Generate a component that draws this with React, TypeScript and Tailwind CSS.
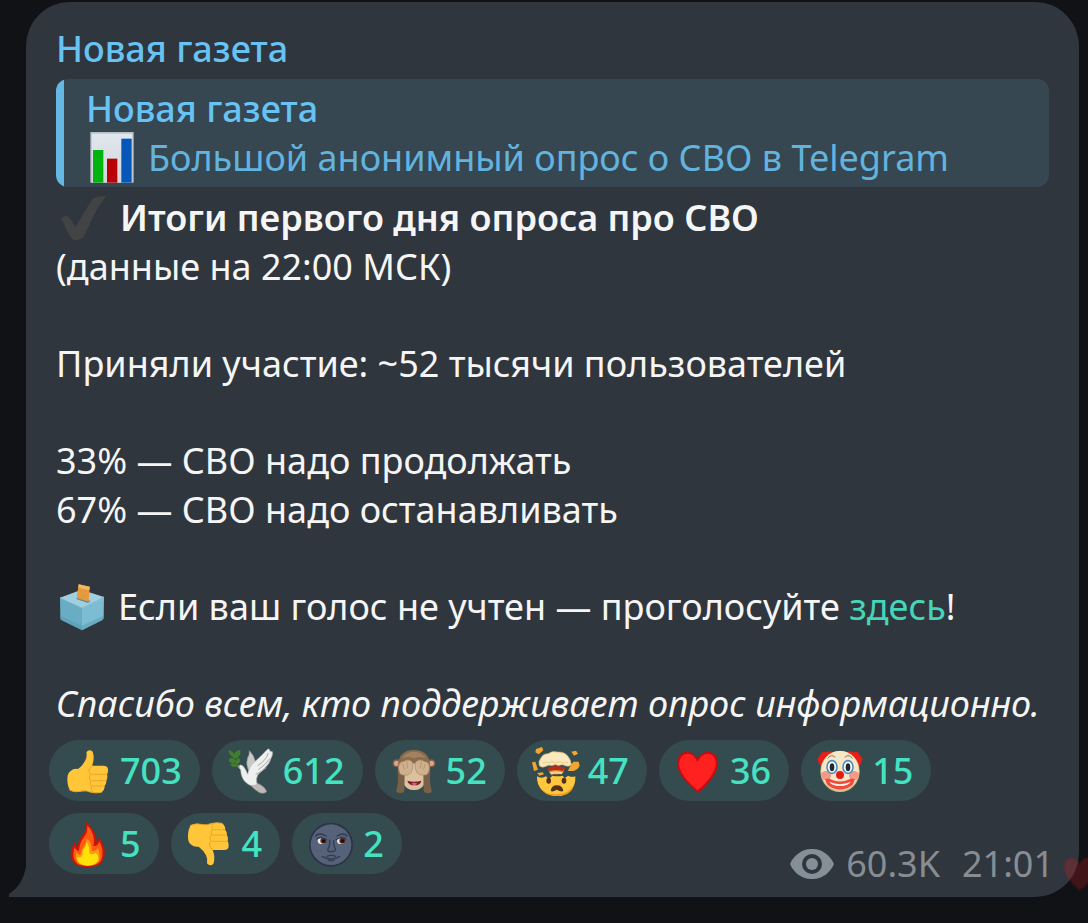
import type { ReactNode } from 'react'

// ============================================
// TYPES
// ============================================

interface EmojiProps {
  label: string
  children: ReactNode
}

interface Reaction {
  id: string
  count: number
  icon: ReactNode
}

// ============================================
// EMOJI
// ============================================

function Emoji({ label, children }: EmojiProps) {
  return (
    <svg viewBox="0 0 132 132" role="img" aria-label={label} className="size-11 flex-none overflow-visible">
      {children}
    </svg>
  )
}

function ThumbShape() {
  return (
    <>
      <path
        fill="#ffc63a"
        d="M61 10Q69 -1 80 8Q87 28 78 50L112 50Q126 50 126 62Q127 70 123 76Q126 86 121 95Q122 104 116 110Q116 124 106 130Q88 134 70 128Q60 124 50 126Q25 132 12 124Q4 112 4 90Q4 72 14 66Q22 58 36 60Q52 48 58 34Q64 22 61 10Z"
      />
      <g fill="none" stroke="#f0a42a" strokeWidth="3" strokeLinecap="round">
        <path d="M78 50Q69 57 68 68Q70 76 78 76L122 76" />
        <path d="M72 78Q66 88 74 95L119 95" />
        <path d="M74 97Q70 106 77 111L114 111" />
        <path d="M76 113Q73 124 80 129" />
        <path d="M12 124Q28 132 50 126Q62 124 72 129Q90 134 106 130" />
      </g>
    </>
  )
}

function ThumbUp() {
  return (
    <Emoji label="Thumb up">
      <ThumbShape />
    </Emoji>
  )
}

function ThumbDown() {
  return (
    <Emoji label="Thumb down">
      <g transform="translate(-4 134) scale(1 -1)">
        <ThumbShape />
      </g>
    </Emoji>
  )
}

function Dove() {
  return (
    <Emoji label="Dove">
      <path fill="#c9c9c7" stroke="#8f9393" strokeWidth="2" d="M57 60Q50 42 56 26Q62 18 61 5Q75 18 79 38L70 78Z" />
      <path fill="#bdbab8" stroke="#8e8b8a" strokeWidth="2" d="M62 98Q80 100 92 106Q108 114 113 128Q104 136 92 131Q78 124 62 106Z" />
      <path
        fill="#efeff0"
        stroke="#b4b5b6"
        strokeWidth="2"
        d="M27 53Q33 44 42 51Q50 60 56 76Q60 50 82 34Q100 18 114 2Q122 -4 123 7L130 8Q132 18 126 28Q122 44 108 56Q98 66 86 78Q80 90 84 106Q66 116 50 100Q36 86 35 62Z"
      />
      <g fill="none" stroke="#aaa9aa" strokeWidth="3">
        <path d="M118 12Q112 34 86 50" />
        <path d="M123 28Q112 46 88 62" />
        <path d="M112 56Q98 68 80 76" />
      </g>
      <path fill="#8a8a86" d="M22 52L31 48L32 57Z" />
      <path stroke="#4b6a2a" strokeWidth="4" fill="none" d="M26 52Q16 34 8 12" />
      <g fill="#3f7f2d">
        <path d="M-2 4Q16 4 16 24Q0 22 -2 4Z" />
        <path d="M14 24Q14 4 34 2Q38 22 18 30Z" />
        <path d="M16 30Q2 22 -2 34Q4 48 20 40Z" />
        <path d="M18 36Q26 24 34 30Q34 46 22 46Z" />
        <path d="M22 46Q8 38 3 48Q14 58 26 52Z" />
      </g>
    </Emoji>
  )
}

function Monkey() {
  return (
    <Emoji label="See-no-evil monkey">
      <circle cx="14" cy="43" r="12" fill="#7e6246" />
      <circle cx="118" cy="43" r="12" fill="#7e6246" />
      <circle cx="14" cy="43" r="8" fill="#dfa28e" />
      <circle cx="118" cy="43" r="8" fill="#dfa28e" />
      <path fill="#8b6b4b" d="M18 44Q24 3 66 3Q108 3 114 44Q118 88 100 108L32 108Q14 88 18 44Z" />
      <path fill="#a3835f" d="M30 28Q44 8 66 8Q88 8 102 28Q84 20 66 28Q46 20 30 28Z" />
      <path fill="#dcc19e" d="M28 54Q42 30 66 44Q90 30 104 54L98 104Q86 124 66 123Q46 124 34 104Z" />
      <path fill="#796048" d="M17 68Q28 78 38 78L37 124Q36 133 26 132Q12 134 13 124Q20 100 17 68Z" />
      <path fill="#796048" d="M115 68Q104 78 94 78L95 124Q96 133 106 132Q120 134 119 124Q112 100 115 68Z" />
      <path fill="#cfb28d" stroke="#a88b68" strokeWidth="2" d="M20 52Q22 38 34 38Q48 28 60 38Q66 50 58 70Q48 82 34 78Q20 80 20 52Z" />
      <path fill="#cfb28d" stroke="#a88b68" strokeWidth="2" d="M112 52Q110 38 98 38Q84 28 72 38Q66 50 74 70Q84 82 98 78Q112 80 112 52Z" />
      <path fill="none" stroke="#a88b68" strokeWidth="2" d="M32 44L38 62M44 36L47 58M100 44L94 62M88 36L85 58" />
      <path fill="#7c1f2c" d="M46 95Q66 101 88 95Q86 109 67 109Q50 109 46 95Z" />
      <path fill="#d9607c" d="M58 104Q67 99 76 104Q67 112 58 104Z" />
    </Emoji>
  )
}

function ExplodingHead() {
  return (
    <Emoji label="Exploding head">
      <path fill="#ffc83c" d="M9 82Q22 90 36 82L44 90L56 80Q70 84 86 80L92 88L102 80Q114 86 124 82Q126 112 106 128Q88 143 66 141Q42 142 24 124Q8 108 9 82Z" />
      <path fill="#f09a25" d="M14 106Q26 136 66 136Q106 136 120 106Q118 126 98 136Q66 148 34 132Q18 120 14 106Z" />
      <g fill="#f2a632">
        <path d="M6 0L24 -6L28 4L14 16L4 10Z" />
        <path d="M112 8L126 5L132 14L120 20Z" />
        <path d="M-6 40L4 38L8 50L12 62L0 66Z" />
        <path d="M118 38L134 38L137 50Q132 62 118 66L102 66L106 56Z" />
        <path d="M10 72L26 70L30 76L16 80Z" />
      </g>
      <path fill="#e28020" d="M42 58L92 56L88 70Q76 78 62 76L46 70Z" />
      <path fill="#b92a18" d="M40 56Q66 46 94 56L86 66Q66 60 46 66Z" />
      <path fill="#f3cf8a" d="M46 70Q66 64 88 70L82 76Q66 72 52 77Z" />
      <path fill="#f8e8bd" stroke="#d9a860" strokeWidth="2" d="M16 50Q12 38 20 28Q26 14 42 14Q56 4 70 9Q92 8 102 22Q112 34 112 48Q104 54 94 50Q84 44 74 50Q64 44 54 50Q44 46 36 52Q24 58 16 50Z" />
      <path fill="none" stroke="#eecb86" strokeWidth="3" d="M26 42Q34 36 44 42Q54 34 66 42Q78 34 88 42Q94 37 102 42" />
      <g fill="#573017">
        <ellipse cx="44" cy="95" rx="7" ry="9" />
        <ellipse cx="90" cy="95" rx="7" ry="9" />
        <path d="M50 126Q52 109 68 109Q86 109 88 126Q82 130 68 122Q56 130 50 126Z" />
      </g>
    </Emoji>
  )
}

function HeartShape() {
  return (
    <>
      <path fill="#c40d10" d="M65 132Q58 126 48 116Q4 78 3 42Q4 12 30 8Q54 7 64 29Q76 7 99 8Q125 12 126 42Q124 78 84 116Q72 127 65 132Z" />
      <path fill="#ff2020" d="M65 124Q12 82 9 43Q12 16 34 14Q54 14 64 39Q76 14 96 14Q118 16 120 43Q116 82 65 124Z" />
    </>
  )
}

function Heart() {
  return (
    <Emoji label="Red heart">
      <HeartShape />
    </Emoji>
  )
}

function Clown() {
  return (
    <Emoji label="Clown">
      <path fill="#e61f18" d="M2 40Q-6 26 6 20Q8 6 24 10Q38 2 46 12L20 54Q4 52 2 40Z" />
      <path fill="#e61f18" d="M130 40Q138 26 126 20Q124 6 108 10Q94 2 86 12L112 54Q128 52 130 40Z" />
      <ellipse cx="66" cy="67" rx="59" ry="62" fill="#d9bd8b" />
      <ellipse cx="66" cy="65" rx="56" ry="59" fill="#f8e7c5" />
      <ellipse cx="24" cy="80" rx="15" ry="14" fill="#f39a87" />
      <ellipse cx="108" cy="80" rx="15" ry="14" fill="#f39a87" />
      <path fill="none" stroke="#86745b" strokeWidth="3" strokeLinecap="round" d="M30 27Q40 14 51 24M81 24Q92 14 103 27" />
      <g stroke="#4b91c9" strokeWidth="5" fill="#ffffff">
        <ellipse cx="42" cy="54" rx="15" ry="19" />
        <ellipse cx="90" cy="54" rx="15" ry="19" />
      </g>
      <ellipse cx="42" cy="55" rx="7" ry="12" fill="#24282c" />
      <ellipse cx="90" cy="55" rx="7" ry="12" fill="#24282c" />
      <circle cx="66" cy="78" r="12" fill="#e51b14" />
      <path fill="#f04a3e" d="M22 91Q30 86 38 91Q66 104 94 91Q102 86 110 91Q108 118 66 122Q24 118 22 91Z" />
      <path fill="#fff4f0" d="M34 99Q66 112 98 99Q90 111 66 111Q42 111 34 99Z" />
    </Emoji>
  )
}

function Flame() {
  return (
    <Emoji label="Fire">
      <path fill="#c9150a" d="M60 0Q72 8 82 26Q92 40 91 60Q99 56 96 44Q108 54 115 78Q120 104 106 122Q94 135 66 135Q34 137 21 120Q10 104 16 82Q20 70 27 60Q29 72 34 76Q36 56 50 38Q62 22 60 0Z" />
      <path fill="#ff5b10" d="M64 12Q74 18 80 36Q86 52 82 72Q96 74 100 58Q112 80 109 102Q106 126 82 130L44 130Q22 122 22 98Q22 84 26 76Q30 86 39 87Q40 64 52 48Q66 32 64 12Z" />
      <path fill="#ff9812" d="M62 50Q78 60 77 86Q88 90 96 78Q104 98 100 114Q94 130 66 131Q34 130 30 110Q28 98 32 90Q36 100 44 98Q44 84 54 72Q62 62 62 50Z" />
      <path fill="#ffe20a" d="M61 61Q71 70 70 94Q80 100 88 92Q100 100 97 114Q90 131 64 131Q34 130 33 106Q44 110 50 98Q48 84 56 78Q62 70 61 61Z" />
    </Emoji>
  )
}

function NewMoon() {
  return (
    <Emoji label="New moon face">
      <circle cx="66" cy="68" r="66" fill="#2d3345" />
      <circle cx="66" cy="68" r="61" fill="#56617a" />
      <g fill="none" stroke="#333b50" strokeWidth="4" strokeLinecap="round">
        <path d="M20 42Q30 30 52 42" />
        <path d="M84 42Q104 30 114 42" />
        <path d="M62 54Q64 72 56 82Q58 92 66 88Q76 92 80 82Q74 74 74 56" />
        <path d="M40 104Q66 118 92 104" />
        <path d="M54 103Q66 97 80 103M58 114Q66 119 76 114" />
      </g>
      <ellipse cx="38" cy="56" rx="12" ry="10" fill="#efe6de" />
      <ellipse cx="96" cy="56" rx="12" ry="10" fill="#efe6de" />
      <circle cx="43" cy="56" r="9" fill="#5c2d20" />
      <circle cx="100" cy="56" r="9" fill="#5c2d20" />
      <circle cx="44" cy="57" r="5" fill="#160d10" />
      <circle cx="101" cy="57" r="5" fill="#160d10" />
      <path fill="none" stroke="#333b50" strokeWidth="4" d="M22 52Q36 40 54 54M80 54Q98 40 112 52" />
    </Emoji>
  )
}

function BarChart() {
  return (
    <svg viewBox="0 0 132 152" role="img" aria-label="Bar chart" className="w-11 flex-none">
      <defs>
        <linearGradient id="paper" x1="0" y1="0" x2="0" y2="1">
          <stop offset="0" stopColor="#dfe8ee" />
          <stop offset="1" stopColor="#d3d5da" />
        </linearGradient>
      </defs>
      <rect x="1" y="0" width="130" height="152" fill="#b8bec6" />
      <rect x="5" y="5" width="122" height="147" fill="url(#paper)" />
      <rect x="9" y="54" width="31" height="98" fill="#00b40f" />
      <rect x="51" y="80" width="31" height="72" fill="#b90207" />
      <rect x="94" y="20" width="31" height="132" fill="#0756ba" />
    </svg>
  )
}

function CheckMark() {
  return (
    <Emoji label="Check mark">
      <path fill="#424344" d="M1 70Q12 56 25 62Q34 70 46 94Q72 48 98 8Q114 -3 138 1Q112 34 96 68Q80 106 70 124Q56 136 40 131Q24 116 16 92Q10 76 1 70Z" />
    </Emoji>
  )
}

function BallotBox() {
  return (
    <Emoji label="Ballot box">
      <path fill="#a0d0e0" d="M0 38L64 14L132 36L66 68Z" />
      <path fill="#69adc5" d="M0 38L66 68L66 136L5 106Q1 104 1 98Z" />
      <path fill="#7cbdd3" d="M132 36L66 68L66 136L126 106Q131 103 131 98Z" />
      <path fill="#4f91ab" d="M1 92L66 122L131 92L131 98Q131 103 126 106L66 136L5 106Q1 104 1 98Z" opacity="0.4" />
      <path fill="none" stroke="#a9d8e5" strokeWidth="2" d="M0 38L66 68L132 36" />
      <path fill="#5b8fa4" d="M48 42L84 54L92 48L56 36Z" />
      <path fill="#e79a3b" d="M56 -2L89 5L86 50L50 39Z" />
      <path fill="#f5b75f" d="M56 -2L89 5L88 16L55 8Z" />
    </Emoji>
  )
}

function Eye() {
  return (
    <svg viewBox="0 0 44 30" aria-hidden="true" className="w-11 flex-none">
      <path
        fill="#858f98"
        fillRule="evenodd"
        d="M22 0C34 0 41 8 44 15C41 22 34 30 22 30C10 30 3 22 0 15C3 8 10 0 22 0ZM22 5A10 10 0 1 0 22 25A10 10 0 1 0 22 5Z"
      />
      <circle cx="22" cy="15" r="6" fill="#858f98" />
    </svg>
  )
}

// ============================================
// DATA
// ============================================

const reactions: Reaction[] = [
  { id: 'thumb-up', count: 703, icon: <ThumbUp /> },
  { id: 'dove', count: 612, icon: <Dove /> },
  { id: 'monkey', count: 52, icon: <Monkey /> },
  { id: 'exploding', count: 47, icon: <ExplodingHead /> },
  { id: 'heart', count: 36, icon: <Heart /> },
  { id: 'clown', count: 15, icon: <Clown /> },
  { id: 'flame', count: 5, icon: <Flame /> },
  { id: 'thumb-down', count: 4, icon: <ThumbDown /> },
  { id: 'moon', count: 2, icon: <NewMoon /> },
]

// ============================================
// MESSAGE
// ============================================

function ReplyQuote() {
  return (
    <blockquote className="mt-[6px] flex rounded-xl overflow-hidden bg-[#364752] text-[#67c3f3]">
      <span className="w-2 flex-none bg-[#66b8e4]" />
      <div className="flex-1 pl-[22px] pr-4 py-[5px]">
        <p className="font-medium">Новая газета</p>
        <p className="flex items-center h-[49px]">
          <span className="flex-none ml-1 mr-[14px]">
            <BarChart />
          </span>
          <span className="text-[#62b3de]">Большой анонимный опрос о СВО в Telegram</span>
        </p>
      </div>
    </blockquote>
  )
}

function Reactions() {
  return (
    <div className="flex flex-wrap gap-3 mt-3 pl-[23px] pr-[30px]">
      {reactions.map((reaction) => (
        <button
          key={reaction.id}
          type="button"
          className="flex items-center gap-[10px] h-[61px] pl-[17px] pr-[18px] rounded-full bg-[#344b4f] text-[#45e2c2] font-medium"
        >
          {reaction.icon}
          <span>{reaction.count}</span>
        </button>
      ))}
      <div className="ml-auto -mr-[5px] -mb-[14px] self-end flex items-center text-[#878d93]">
        <Eye />
        <span className="ml-3">60.3K</span>
        <time className="ml-[22px]">21:01</time>
      </div>
    </div>
  )
}

export default function App() {
  return (
    <main className="relative min-h-screen overflow-hidden bg-[#111216] pt-[2px] pl-[26px] pr-[9px] pb-[26px] font-['Noto_Sans',sans-serif] text-[36px] leading-[49px] text-[#f5f5f5]">
      <article className="relative rounded-[44px] rounded-bl-none bg-[#30363e] pt-[22px] pb-[23px]">
        {/* Bubble tail */}
        <svg viewBox="0 0 17 30" aria-hidden="true" className="absolute bottom-0 right-full w-[17px] h-[30px]">
          <path fill="#30363e" d="M17 0L17 30L0 30L0 27Q14 18 17 0Z" />
        </svg>

        <div className="px-[30px]">
          <h1 className="font-medium text-[#67c3f3]">Новая газета</h1>
          <ReplyQuote />

          <div className="mt-[6px] flex flex-col gap-12">
            <div>
              <h2 className="flex items-center font-semibold">
                <span className="flex-none ml-1 mr-4">
                  <CheckMark />
                </span>
                Итоги первого дня опроса про СВО
              </h2>
              <p>(данные на 22:00 МСК)</p>
            </div>
            <p>Приняли участие: ~52 тысячи пользователей</p>
            <div>
              <p>33% — СВО надо продолжать</p>
              <p>67% — СВО надо останавливать</p>
            </div>
            <p className="flex items-center">
              <span className="flex-none ml-1 mr-[14px]">
                <BallotBox />
              </span>
              <span>
                Если ваш голос не учтен — проголосуйте <a href="#vote" className="text-[#45d5b8]">здесь</a>!
              </span>
            </p>
            <p className="italic">Спасибо всем, кто поддерживает опрос информационно.</p>
          </div>
        </div>

        <Reactions />
      </article>

      {/* Faded quick reaction over the bubble corner */}
      <svg viewBox="0 0 132 132" aria-hidden="true" className="absolute -right-[10px] bottom-8 size-9 opacity-20">
        <HeartShape />
      </svg>
    </main>
  )
}
